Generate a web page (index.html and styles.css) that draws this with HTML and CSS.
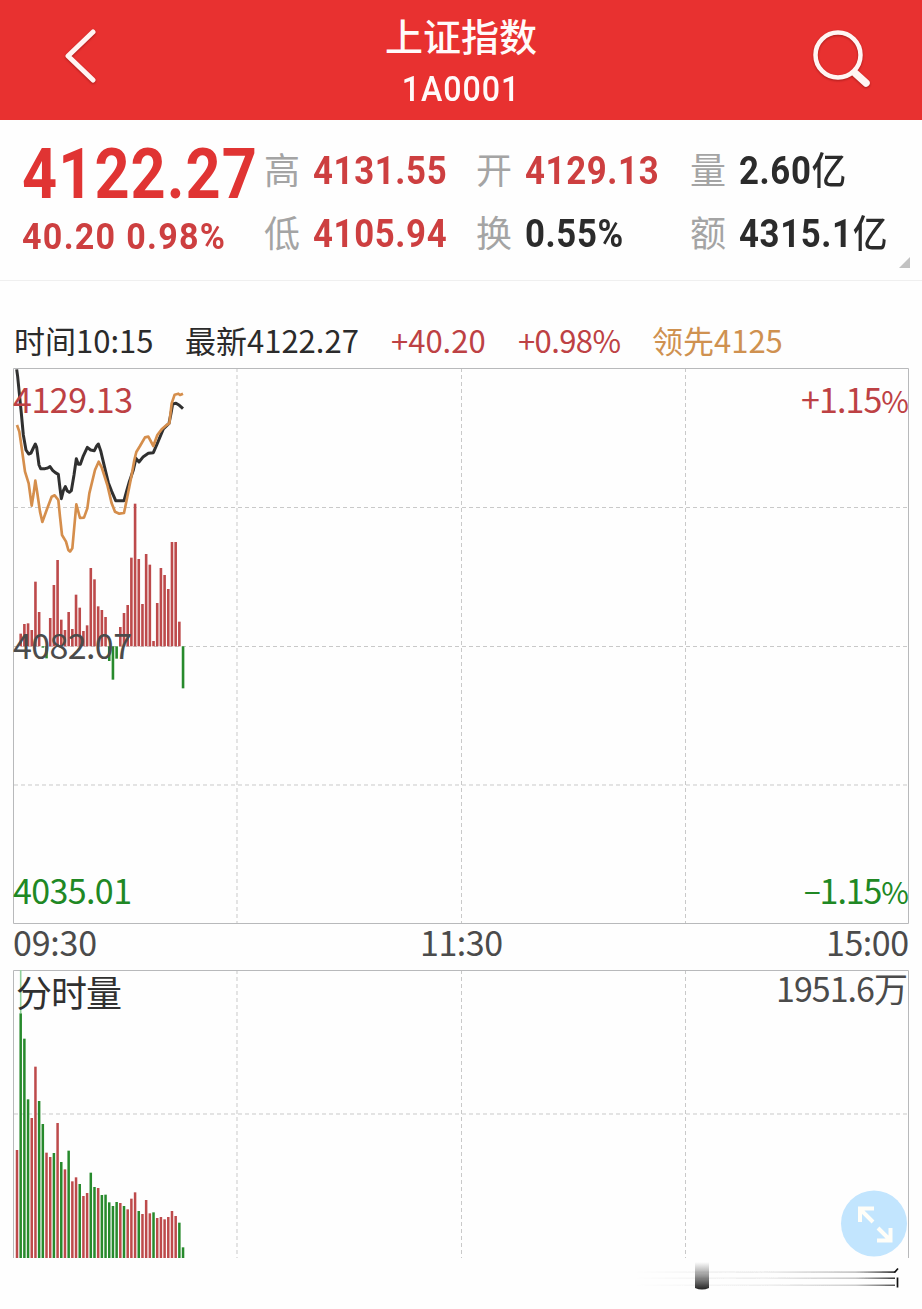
FILE: index.html
```html
<!DOCTYPE html>
<html lang="zh">
<head>
    <meta charset="UTF-8">
    <meta name="viewport" content="width=device-width, initial-scale=1.0">
    <title>上证指数</title>
    <link rel="stylesheet" href="styles.css">
</head>
<body>
    <header class="header">
        <svg class="back" width="40" height="60" viewBox="0 0 40 60">
            <path d="M32 5 L7 29 L32 53" />
        </svg>
        <div class="title">
            <h1>上证指数</h1>
            <div class="code">1A0001</div>
        </div>
        <svg class="search" width="64" height="64" viewBox="0 0 64 64">
            <circle cx="28" cy="28" r="22.5" />
            <path class="handle" d="M45 46 L56 56" />
        </svg>
    </header>

    <section class="quote">
        <div class="price">4122.27</div>
        <div class="item"><span class="label">高</span><span class="value up">4131.55</span></div>
        <div class="item"><span class="label">开</span><span class="value up">4129.13</span></div>
        <div class="item"><span class="label">量</span><span class="value">2.60<i>亿</i></span></div>
        <div class="change">40.20 0.98%</div>
        <div class="item"><span class="label">低</span><span class="value up">4105.94</span></div>
        <div class="item"><span class="label">换</span><span class="value">0.55%</span></div>
        <div class="item"><span class="label">额</span><span class="value">4315.1<i>亿</i></span></div>
        <div class="corner"></div>
    </section>

    <div class="info">
        <span>时间10:15</span>
        <span>最新4122.27</span>
        <span class="up">+40.20</span>
        <span class="up percent">+0.98%</span>
        <span class="lead">领先4125</span>
    </div>

    <!-- 分时走势 -->
    <svg class="chart" width="922" height="602" viewBox="0 0 922 602">
        <path class="grid" d="M237 8V563 M461.5 8V563 M685.5 8V563 M14 147.5H908 M14 286.5H908 M14 425H908" />
        <path class="frame" d="M13.5 8.5H908.5V563.5H13.5Z" />
        <g id="forceBars"></g>
        <g transform="scale(.33333)">
            <polyline class="line" points="50,28 53,50 58,100 64,160 70,225 78,270 86,282 93,279 100,264 106,252 110,262 117,315 122,326 135,326 143,324 150,320 158,331 166,338 175,343 180,385 184,416 190,392 196,380 202,393 208,397 214,392 222,345 229,296 235,313 241,313 249,290 262,262 272,270 283,272 290,258 295,252 302,272 311,310 325,368 335,394 347,422 372,422 380,393 388,365 400,330 408,295 417,306 430,290 445,280 460,278 472,250 490,207 507,190 513,160 518,132 528,130 538,136 549,146" />
            <polyline class="line lead-line" points="51,195 58,215 66,270 75,335 86,370 95,437 101,400 106,362 112,400 120,455 127,486 140,450 155,410 164,406 175,420 180,470 186,525 198,545 205,570 210,575 217,565 222,510 229,433 240,474 252,473 262,445 268,400 285,330 296,305 305,322 322,375 335,430 345,455 358,461 372,459 378,430 388,380 395,345 403,300 409,276 420,258 435,232 445,230 460,258 472,225 485,208 500,195 508,190 515,130 524,104 535,101 540,105 549,101" />
        </g>
        <text class="t-up" x="13" y="52.5" textLength="120">4129.13</text>
        <text class="t-up" x="801" y="52.5" textLength="108">+1.15<tspan class="pct">%</tspan></text>
        <text x="13" y="298.5" textLength="119">4082.07</text>
        <text class="t-down" x="13" y="543.5" textLength="119">4035.01</text>
        <text class="t-down" x="804" y="543.5" textLength="105"><tspan class="minus">−</tspan>1.15<tspan class="pct">%</tspan></text>
        <text x="13" y="595.5" textLength="84">09:30</text>
        <text x="420" y="595.5" textLength="83">11:30</text>
        <text x="826" y="595.5" textLength="83">15:00</text>
    </svg>

    <!-- 分时量 -->
    <svg class="chart volume" width="922" height="349" viewBox="0 0 922 349">
        <defs>
            <linearGradient id="streak">
                <stop offset="0" stop-color="#333" stop-opacity="0" />
                <stop offset=".5" stop-color="#333" stop-opacity=".08" />
                <stop offset=".85" stop-color="#333" stop-opacity=".3" />
                <stop offset="1" stop-color="#111" stop-opacity=".9" />
            </linearGradient>
            <linearGradient id="knob" x2="0" y2="1">
                <stop offset="0" stop-color="#444" stop-opacity="0" />
                <stop offset=".5" stop-color="#444" stop-opacity=".55" />
                <stop offset="1" stop-color="#222" />
            </linearGradient>
            <filter id="soft" x="-5%" y="-200%" width="110%" height="500%">
                <feGaussianBlur stdDeviation="0 .7" />
            </filter>
        </defs>
        <path class="grid" d="M237 10V298 M461.5 10V298 M685.5 10V298 M14 154H908" />
        <path class="frame" d="M13.5 298V10.5H908.5V298" />
        <g id="volumeBars"></g>
        <text class="name" x="16" y="46.5" textLength="106">分时量</text>
        <text x="776" y="41.5" textLength="132">1951.6万</text>

        <g class="expand">
            <circle cx="874" cy="263.5" r="33" />
            <path d="M873 262 L860 249 M860 262 V248.5 H874" />
            <path d="M878 268 L890 280 M877 280.5 H890.5 V268" />
        </g>

        <g filter="url(#soft)">
            <rect x="633" y="311.3" width="262" height="1.6" fill="url(#streak)" />
            <rect x="633" y="317.5" width="262" height="1.4" fill="url(#streak)" />
            <rect x="633" y="324.6" width="262" height="1.2" fill="url(#streak)" />
        </g>
        <path d="M695 302H709V328Q702 331 695 328Z" fill="url(#knob)" />
        <path class="tick" d="M894.5 312.5L898 308.5 M897.5 317.5V327.5" />
    </svg>

    <script>
        const STEP = 3.69;
        const START = 17;

        // 柱顶位置，单位为 1/3 像素
        const force = [454, 416, 387, 385, 405, 260, 351, 458, 490, 369, 270, 195, 374, 405, 351, 402,
            299, 338, 408, 391, 219, 253, 334, 345, 366, 498, 554, 491, 396, 354, 330, 188, 26, 192,
            327, 177, 209, 438, 324, 219, 240, 282, 141, 141, 380, 580];
        const volume = [570, 30, 236, 418, 474, 320, 423, 492, 578, 591, 579, 489, 606, 628, 572, 664,
            652, 672, 708, 699, 638, 681, 684, 705, 704, 727, 738, 726, 729, 738, 748, 716, 697, 753,
            762, 720, 760, 757, 774, 771, 778, 771, 753, 768, 788, 862];
        const colors = 'rgggrrggrrgrgrgrrgrrggrgggggrgrrrgrrrgrrrrrrgg';

        function addBar(parent, i, y1, y2, cls, width) {
            const rect = document.createElementNS('http://www.w3.org/2000/svg', 'rect');
            rect.setAttribute('x', START + i * STEP - width / 2);
            rect.setAttribute('y', Math.min(y1, y2));
            rect.setAttribute('width', width);
            rect.setAttribute('height', Math.abs(y2 - y1));
            rect.setAttribute('class', cls);
            parent.appendChild(rect);
        }

        const forceBars = document.getElementById('forceBars');
        force.forEach((v, i) => {
            addBar(forceBars, i, 135 + v / 3, 286.3, v > 454 ? 'bar-down' : 'bar-up', 2.6);
        });

        const volumeBars = document.getElementById('volumeBars');
        volume.forEach((v, i) => {
            // 最高的一根上半段较淡
            if (i === 1) {
                addBar(volumeBars, i, 10, 53, 'bar-pale', 1.6);
                v = 160;
            }
            addBar(volumeBars, i, v / 3, 298, colors[i] === 'g' ? 'bar-down' : 'bar-up', 2.5);
        });
    </script>
</body>
</html>
```
FILE: styles.css
```css
body {
    margin: 0;
    width: 922px;
    height: 1309px;
    overflow: hidden;
    background-color: #fefefe;
    color: #2b2b2b;
    font-family: 'Noto Sans CJK SC', sans-serif;
}
.header {
    display: flex;
    justify-content: space-between;
    box-sizing: border-box;
    height: 120px;
    padding: 0 48px 0 61px;
    background-color: #e83130;
    color: #fffafa;
}
.header svg {
    fill: none;
    stroke: #fff5f3;
    stroke-linecap: round;
    stroke-linejoin: round;
    filter: drop-shadow(0 1px 1px rgba(90, 0, 0, 0.45));
}
.back {
    margin-top: 27px;
    stroke-width: 5;
}
.search {
    margin-top: 27px;
    stroke-width: 4.5;
}
.search .handle {
    stroke-width: 7.5;
}
.title {
    margin-left: 11px;
    padding-top: 9px;
    text-align: center;
}
h1 {
    margin: 0;
    font-size: 38px;
    line-height: 52px;
    font-weight: 500;
}
.code {
    font-family: Roboto, sans-serif;
    font-size: 35px;
    font-weight: 500;
    line-height: 58px;
    letter-spacing: 1px;
    transform: scaleX(0.92);
}
.quote {
    position: relative;
    display: grid;
    grid-template-columns: 242px 212px 214px 1fr;
    grid-template-rows: 62px 64px;
    align-items: center;
    box-sizing: border-box;
    height: 161px;
    padding: 20px 0 0 22px;
    border-bottom: 1px solid #efefef;
}
.price {
    padding-top: 5px;
    color: #e03433;
    font-family: Roboto, sans-serif;
    font-size: 70px;
    font-weight: 700;
    line-height: 62px;
    letter-spacing: 1.2px;
    white-space: nowrap;
    transform: scaleX(0.875);
    transform-origin: left center;
}
.change {
    padding-top: 4px;
    color: #cd3f40;
    font: 700 37px Roboto, sans-serif;
    letter-spacing: 1.4px;
    white-space: nowrap;
    transform: scaleX(0.92);
    transform-origin: left center;
}
.item {
    display: flex;
    align-items: center;
    line-height: 60px;
    white-space: nowrap;
}
.value {
    font-family: Roboto, 'Noto Sans CJK SC', sans-serif;
    font-size: 38px;
    font-weight: 700;
    letter-spacing: 0.7px;
    transform: scaleX(0.915);
    transform-origin: left center;
}
.value i {
    font-style: normal;
    font-weight: 500;
}
.label {
    width: 49px;
    margin-top: -6px;
    color: #a4a4a4;
    font-size: 36px;
}
.up {
    color: #cd3f40;
}
.corner {
    position: absolute;
    right: 12px;
    bottom: 12px;
    border-left: 11px solid transparent;
    border-bottom: 11px solid #c2c2c2;
}
.info {
    display: grid;
    grid-template-columns: 171px 206px 127px 134px 1fr;
    height: 79px;
    padding-left: 14px;
    font-size: 31px;
    line-height: 118px;
    white-space: nowrap;
}
.info .up {
    color: #bd4144;
}
.info .percent {
    letter-spacing: -0.6px;
}
.info .lead {
    color: #cf9150;
}
.chart {
    display: block;
    overflow: visible;
}
.volume {
    margin-top: -2px;
}
.chart text {
    font-family: 'Noto Sans CJK SC', sans-serif;
    font-size: 34px;
    fill: #4b4b4b;
}
.chart .name {
    font-size: 36px;
    fill: #303030;
}
.chart .t-up {
    fill: #bd4144;
}
.chart .t-down {
    fill: #208824;
}
.chart .pct {
    font-size: 30px;
}
.chart .minus {
    font-size: 30px;
}
.frame {
    fill: none;
    stroke: #b8b9bb;
}
.grid {
    fill: none;
    stroke: #c9c9c9;
    stroke-dasharray: 4 3;
}
.line {
    fill: none;
    stroke: #303030;
    stroke-width: 9;
    stroke-linejoin: round;
}
.lead-line {
    stroke: #d58e4c;
    stroke-width: 8;
}
.bar-up {
    fill: #bd4a4b;
}
.bar-down {
    fill: #278a2c;
}
.bar-pale {
    fill: #8fd09b;
}
.expand circle {
    fill: #c2e5fe;
}
.expand path {
    fill: none;
    stroke: #fffef8;
    stroke-width: 4;
}
.tick {
    fill: none;
    stroke: #111;
    stroke-width: 1.7;
}
```
